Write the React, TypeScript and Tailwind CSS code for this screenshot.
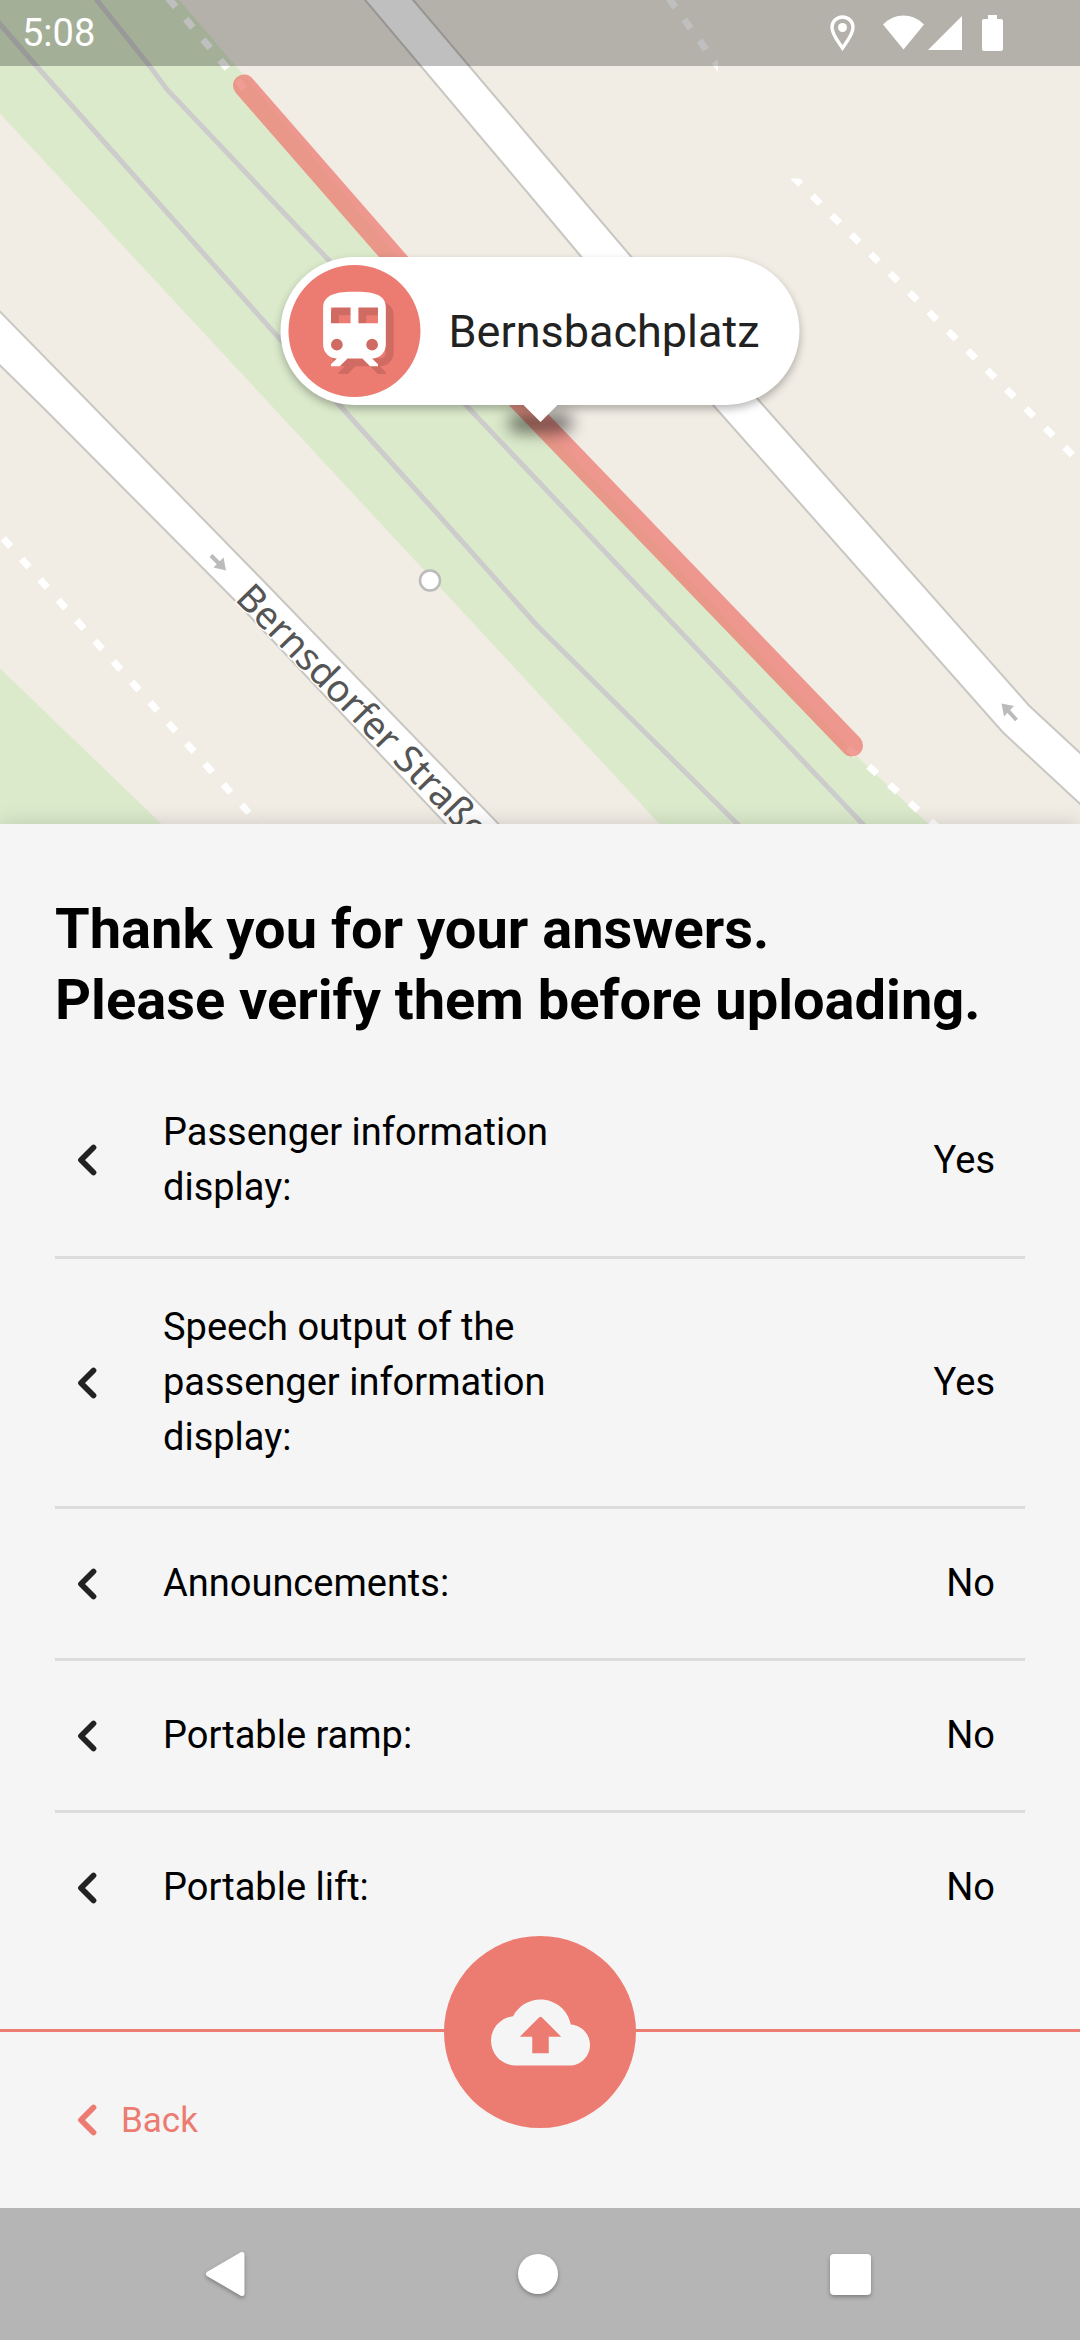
import React from "react";

type Question = { label: string; answer: string };

const questions: Question[] = [
  { label: "Passenger information display:", answer: "Yes" },
  { label: "Speech output of the passenger information display:", answer: "Yes" },
  { label: "Announcements:", answer: "No" },
  { label: "Portable ramp:", answer: "No" },
  { label: "Portable lift:", answer: "No" },
];

const trainPath =
  "M12 2C8 2 4 2.5 4 6V15.5A3.5 3.5 0 0 0 7.5 19L6 20.5V21H8.23L10.23 19H14L16 21H18V20.5L16.5 19A3.5 3.5 0 0 0 20 15.5V6C20 2.5 16.42 2 12 2M7.5 17A1.5 1.5 0 0 1 6 15.5A1.5 1.5 0 0 1 7.5 14A1.5 1.5 0 0 1 9 15.5A1.5 1.5 0 0 1 7.5 17M11 10H6V6H11V10M13 10V6H18V10H13M16.5 17A1.5 1.5 0 0 1 15 15.5A1.5 1.5 0 0 1 16.5 14A1.5 1.5 0 0 1 18 15.5A1.5 1.5 0 0 1 16.5 17Z";

function Chevron() {
  return (
    <svg className="h-8 w-5" viewBox="0 0 20 32" fill="none" aria-hidden="true">
      <path
        d="M16.5 3.5L4 16L16.5 28.5"
        stroke="currentColor"
        strokeWidth="5.7"
        strokeLinecap="round"
        strokeLinejoin="round"
      />
    </svg>
  );
}

function MapDrawing() {
  return (
    <svg
      className="absolute inset-0 h-full w-full"
      viewBox="0 0 1080 825"
      preserveAspectRatio="xMidYMid slice"
      role="img"
      aria-label="Map around Bernsbachplatz"
    >
      <rect width="1080" height="825" fill="#f1ece4" />
      <path d="M0 0H179L243 75L511 392L857 757L929 825H660L275 410L0 114Z" fill="#dbeacb" />
      <path d="M0 669L162 825H0Z" fill="#dbeacb" />
      <g fill="none" stroke="#cccccc" strokeWidth="5">
        <path d="M-4 20L36 66L282 342L430 506L537 626L740 827" />
        <path d="M94 -3L150 67L167 90L329 261L866 828" />
      </g>
      <g stroke="#c8c7c2" strokeWidth="2" fill="#ffffff">
        <path d="M363 -2L540 208L581 257L717 410L1003 733L1084 808V757L1029 706L767 410L631 257L540 150L411 -2Z" />
        <path d="M-3 309L96 410L265 583L502 828H449L234 600L45 410L-3 363Z" />
      </g>
      <g fill="none" stroke="#ffffff" strokeWidth="7">
        <path d="M168.5 -1L245 90" strokeDasharray="11 15.8" />
        <path d="M848 748.4L940 830" strokeDasharray="11 16.6" />
        <path d="M3.3 538.9L270 837" strokeDasharray="11 16.5" />
        <path d="M793 177L1085 468" strokeDasharray="11 16.4" clipPath="url(#tileB)" />
        <path d="M669 -1L730 83" strokeDasharray="11 15" clipPath="url(#tileA)" />
      </g>
      <clipPath id="tileA">
        <rect width="718" height="825" />
      </clipPath>
      <clipPath id="tileB">
        <rect y="179" width="1080" height="646" />
      </clipPath>
      <path
        d="M244 86L511 392L852 746"
        fill="none"
        stroke="#ec7b71"
        strokeOpacity="0.75"
        strokeWidth="22"
        strokeLinecap="round"
        strokeLinejoin="round"
      />
      <circle cx="430" cy="581" r="10" fill="#ffffff" stroke="#bbbbbb" strokeWidth="2.5" />
      <g fill="#bbbbbb" stroke="#bbbbbb">
        <path d="M226 571L223.5 558L213.5 568Z" stroke="none" />
        <path d="M211 556L220 565" strokeWidth="4" />
        <path d="M1001.5 704L1014 706.5L1004 717Z" stroke="none" />
        <path d="M1016.5 720.5L1007 710" strokeWidth="4" />
      </g>
      <text
        transform="translate(234 600) rotate(45.7)"
        fontFamily="'Noto Sans', 'Open Sans', sans-serif"
        fontSize="38"
        fill="#555555"
        stroke="#ffffff"
        strokeWidth="3"
        paintOrder="stroke"
      >
        Bernsdorfer Straße
      </text>
    </svg>
  );
}

function StatusBar() {
  return (
    <header className="absolute inset-x-0 top-0 flex h-[66px] items-center justify-between bg-black/25 pl-[22px] pr-[77px] text-white">
      <time className="text-[38px] leading-none">5:08</time>
      <div className="flex items-center">
        <svg className="mr-7 h-9 w-[25px]" viewBox="0 0 25 36" aria-label="Location">
          <path
            d="M12.5 2C6.5 2 2 6.5 2 12.5C2 19.5 8.5 27 12.5 33C16.5 27 23 19.5 23 12.5C23 6.5 18.5 2 12.5 2Z"
            fill="none"
            stroke="#ffffff"
            strokeWidth="3.4"
          />
          <circle cx="12.5" cy="12.5" r="4.5" fill="#ffffff" />
        </svg>
        <svg className="mr-1 h-9 w-[41px]" viewBox="0 0 41 36" aria-label="Wi-Fi">
          <path d="M0 9.5C12 -2.5 29 -2.5 41 9.5L20.5 34.5Z" fill="#ffffff" />
        </svg>
        <svg className="mr-5 h-9 w-[34px]" viewBox="0 0 34 36" aria-label="Signal">
          <path d="M34 1V35H0Z" fill="#ffffff" />
        </svg>
        <svg className="h-9 w-[21px]" viewBox="0 0 21 36" aria-label="Battery">
          <path
            d="M6 0H15V4H19Q21 4 21 6V34Q21 36 19 36H2Q0 36 0 34V6Q0 4 2 4H6Z"
            fill="#ffffff"
          />
        </svg>
      </div>
    </header>
  );
}

function StopCallout() {
  return (
    <div className="absolute left-1/2 top-[257px] -translate-x-1/2">
      <div className="absolute left-1/2 top-[156px] h-5 w-16 -translate-x-1/2 rounded-full bg-black/50 blur-[8px]" />
      <div className="relative flex items-center rounded-full bg-white p-2 pr-10 shadow-[0_4px_8px_rgba(0,0,0,0.28)]">
        <span className="flex size-[132px] items-center justify-center rounded-full bg-[#ec7b71]">
          <svg className="size-[94px] overflow-visible" viewBox="0 0 24 24" aria-hidden="true">
            <path d={trainPath} fill="#cf6b62" transform="translate(2 2)" />
            <path d={trainPath} fill="#ffffff" />
          </svg>
        </span>
        <span className="ml-7 whitespace-nowrap text-[45px] leading-none text-[#222222]">
          Bernsbachplatz
        </span>
      </div>
      <svg
        className="absolute left-1/2 top-full h-[17px] w-[34px] -translate-x-1/2"
        viewBox="0 0 34 17"
        aria-hidden="true"
      >
        <path d="M0 0H34L17 17Z" fill="#ffffff" />
      </svg>
    </div>
  );
}

function QuestionRow({ label, answer }: Question) {
  return (
    <li className="border-b-[3px] border-[#dcdcdc] last:border-transparent">
      <button
        type="button"
        className="flex min-h-[149px] w-full items-center py-[41px] pl-[22px] pr-[30px] text-left text-[38px] leading-[55px]"
      >
        <span className="text-[#222222]">
          <Chevron />
        </span>
        <span className="ml-[66px] flex-1">
          <span className="block max-w-[430px]">{label}</span>
        </span>
        <span>{answer}</span>
      </button>
    </li>
  );
}

function Footer() {
  return (
    <footer className="relative border-t-[3px] border-[#ec7b71] bg-[#f5f5f5] px-[55px] pb-[58px] pt-[58px]">
      <button
        type="button"
        aria-label="Upload answers"
        className="absolute left-1/2 top-0 flex size-48 -translate-x-1/2 -translate-y-1/2 items-center justify-center rounded-full bg-[#ec7b71]"
      >
        <svg className="size-[99px]" viewBox="0 0 24 24" fill="#f5f5f5" aria-hidden="true">
          <path d="M19.35 10.04C18.67 6.59 15.64 4 12 4 9.11 4 6.6 5.64 5.35 8.04 2.34 8.36 0 10.91 0 14c0 3.31 2.69 6 6 6h13c2.76 0 5-2.24 5-5 0-2.64-2.05-4.78-4.65-4.96zM14 13v4h-4v-4H7l4.65-4.65c.2-.2.51-.2.71 0L17 13h-3z" />
        </svg>
      </button>
      <button
        type="button"
        className="flex h-[60px] items-center gap-6 pl-[22px] text-[35px] leading-none text-[#ec7b71]"
      >
        <Chevron />
        Back
      </button>
    </footer>
  );
}

function SystemNav() {
  return (
    <nav
      aria-label="System navigation"
      className="flex h-[132px] items-center justify-between bg-[#b5b5b5] pl-[205px] pr-[209px] *:drop-shadow-[0_2px_2px_rgba(0,0,0,0.3)]"
    >
      <button type="button" aria-label="Back">
        <svg className="h-12 w-10" viewBox="0 0 40 48">
          <path
            d="M37 4.5V43.5L3.5 24Z"
            fill="#ffffff"
            stroke="#ffffff"
            strokeWidth="5"
            strokeLinejoin="round"
          />
        </svg>
      </button>
      <button type="button" aria-label="Home" className="size-10 rounded-full bg-white" />
      <button type="button" aria-label="Recent apps" className="size-[41px] rounded-sm bg-white" />
    </nav>
  );
}

export default function App() {
  return (
    <div className="flex min-h-screen flex-col bg-[#f5f5f5] font-[Roboto,sans-serif] text-black">
      <section className="relative min-h-[600px] flex-1 overflow-hidden">
        <MapDrawing />
        <StopCallout />
        <StatusBar />
      </section>
      <main className="relative bg-[#f5f5f5] px-[55px] pb-16 pt-[70px] shadow-[0_0_20px_rgba(0,0,0,0.15)]">
        <h1 className="text-[56px] font-bold leading-[71px]">
          Thank you for your answers.
          <br />
          Please verify them before uploading.
        </h1>
        <ul className="mt-7">
          {questions.map((question) => (
            <QuestionRow key={question.label} {...question} />
          ))}
        </ul>
      </main>
      <Footer />
      <SystemNav />
    </div>
  );
}
